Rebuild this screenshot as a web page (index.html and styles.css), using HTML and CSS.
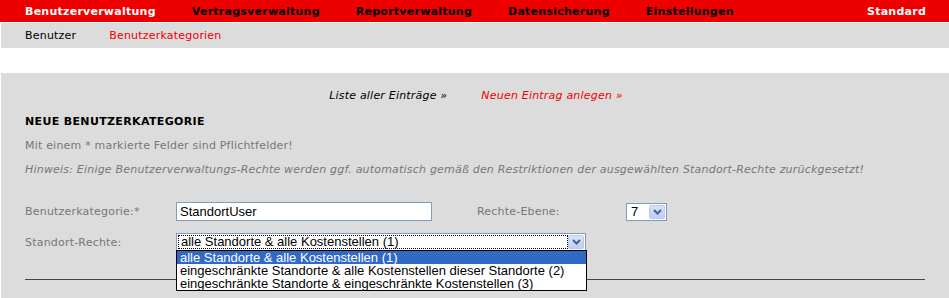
FILE: index.html
```html
<!DOCTYPE html>
<html lang="de">
<head>
  <meta charset="UTF-8" />
  <title>Benutzerkategorie anlegen</title>
  <link rel="stylesheet" href="styles.css">
</head>
<body>
  <div class="topnav">
    <div class="menu">
      <span class="menu-item active">Benutzerverwaltung</span>
      <span class="menu-item">Vertragsverwaltung</span>
      <span class="menu-item">Reportverwaltung</span>
      <span class="menu-item">Datensicherung</span>
      <span class="menu-item">Einstellungen</span>
    </div>
    <span class="user">Standard</span>
  </div>

  <div class="subnav">
    <span class="sub-item">Benutzer</span>
    <span class="sub-item current">Benutzerkategorien</span>
  </div>

  <div class="spacer"></div>

  <div class="content">
    <div class="actions">
      <span class="action">Liste aller Einträge »</span>
      <span class="action new">Neuen Eintrag anlegen »</span>
    </div>

    <h2 class="title">NEUE BENUTZERKATEGORIE</h2>
    <p class="note">Mit einem * markierte Felder sind Pflichtfelder!</p>
    <p class="hint">Hinweis: Einige Benutzerverwaltungs-Rechte werden ggf. automatisch gemäß den Restriktionen der ausgewählten Standort-Rechte zurückgesetzt!</p>

    <div class="form-row">
      <label class="label">Benutzerkategorie:*</label>
      <div class="textbox">StandortUser</div>
      <label class="label label-right">Rechte-Ebene:</label>
      <div class="select small">
        <span class="select-value">7</span>
        <span class="select-btn">
          <svg width="9" height="6" viewBox="0 0 9 6"><path d="M1 1 L4.5 4.5 L8 1" fill="none" stroke="#4d6185" stroke-width="2"/></svg>
        </span>
      </div>
    </div>

    <div class="form-row second">
      <label class="label">Standort-Rechte:</label>
      <div class="select wide">
        <span class="select-value focus">alle Standorte &amp; alle Kostenstellen (1)</span>
        <span class="select-btn">
          <svg width="9" height="6" viewBox="0 0 9 6"><path d="M1 1 L4.5 4.5 L8 1" fill="none" stroke="#4d6185" stroke-width="2"/></svg>
        </span>
        <ul class="options">
          <li class="selected">alle Standorte &amp; alle Kostenstellen (1)</li>
          <li>eingeschränkte Standorte &amp; alle Kostenstellen dieser Standorte (2)</li>
          <li>eingeschränkte Standorte &amp; eingeschränkte Kostenstellen (3)</li>
        </ul>
      </div>
    </div>

    <hr class="rule">
  </div>
</body>
</html>
```

FILE: styles.css
```css
body {
  margin: 0;
  font-family: "DejaVu Sans", Verdana, sans-serif;
  font-size: 11px;
  letter-spacing: 0.2px;
  background: #fff;
  overflow: hidden;
}
.topnav {
  display: flex;
  justify-content: space-between;
  align-items: center;
  height: 22px;
  padding: 0 23px 0 25px;
  background: #ee0000;
  border-bottom: 1px solid #fff;
}
.menu {
  display: flex;
  gap: 36px;
}
.menu-item, .user {
  font-size: 11px;
  font-weight: bold;
  letter-spacing: 0.25px;
  color: #000;
}
.menu-item.active, .user {
  color: #fff;
}
.subnav {
  display: flex;
  gap: 33px;
  align-items: center;
  height: 25px;
  padding: 0 24px;
  margin-left: 1px;
  background: #dcdcdc;
}
.sub-item {
  color: #000;
}
.sub-item.current {
  color: #ee0000;
}
.spacer {
  height: 25px;
}
.content {
  box-sizing: border-box;
  margin-left: 1px;
  height: 225px;
  padding: 16px 24px 0 24px;
  background: #dcdcdc;
}
.actions {
  display: flex;
  justify-content: center;
  gap: 34px;
  padding-left: 2px;
  line-height: 14px;
  font-style: italic;
  margin-bottom: 12px;
}
.action {
  color: #000;
}
.action.new {
  color: #ee0000;
}
.title {
  margin: 0 0 10px;
  font-size: 11px;
  line-height: 14px;
  letter-spacing: 0.35px;
  color: #000;
}
.note, .hint {
  margin: 0 0 10px;
  line-height: 14px;
  color: #777;
}
.hint {
  font-style: italic;
  margin-bottom: 25px;
}
.form-row {
  display: flex;
  align-items: center;
  height: 19px;
}
.form-row.second {
  margin-top: 12px;
  height: 18px;
}
.label {
  width: 151px;
  color: #777;
}
.label-right {
  width: 149px;
  margin-left: 45px;
}
.textbox {
  box-sizing: border-box;
  width: 256px;
  height: 19px;
  padding: 1px 3px;
  border: 1px solid #7f9db9;
  background: #fff;
  font-family: "Liberation Sans", Arial, sans-serif;
  font-size: 13px;
  letter-spacing: 0;
  line-height: 15px;
}
.select {
  position: relative;
  box-sizing: border-box;
  display: flex;
  height: 18px;
  padding: 1px;
  border: 1px solid #7f9db9;
  background: #fff;
  font-family: "Liberation Sans", Arial, sans-serif;
  font-size: 13px;
  letter-spacing: 0;
}
.select.small {
  width: 41px;
}
.select.wide {
  width: 410px;
}
.select-value {
  flex: 1;
  padding-left: 3px;
  line-height: 14px;
}
.select-value.focus {
  outline: 1px dotted #000;
  outline-offset: -1px;
}
.select-btn {
  display: flex;
  align-items: center;
  justify-content: center;
  width: 16px;
  box-sizing: border-box;
  border: 1px solid #b9c9ef;
  border-radius: 2px;
  background: linear-gradient(#d6e3fd, #bccefa);
}
.options {
  position: absolute;
  top: 16px;
  left: -1px;
  width: 411px;
  box-sizing: border-box;
  margin: 0;
  padding: 0;
  list-style: none;
  border: 1px solid #000;
  background: #fff;
}
.options li {
  height: 13px;
  line-height: 13px;
  padding-left: 3px;
  white-space: nowrap;
}
.options li.selected {
  background: #316ac5;
  color: #fff;
}
.rule {
  margin: 28px 0 0 0;
  border: 0;
  border-top: 1px solid #444;
}
```
